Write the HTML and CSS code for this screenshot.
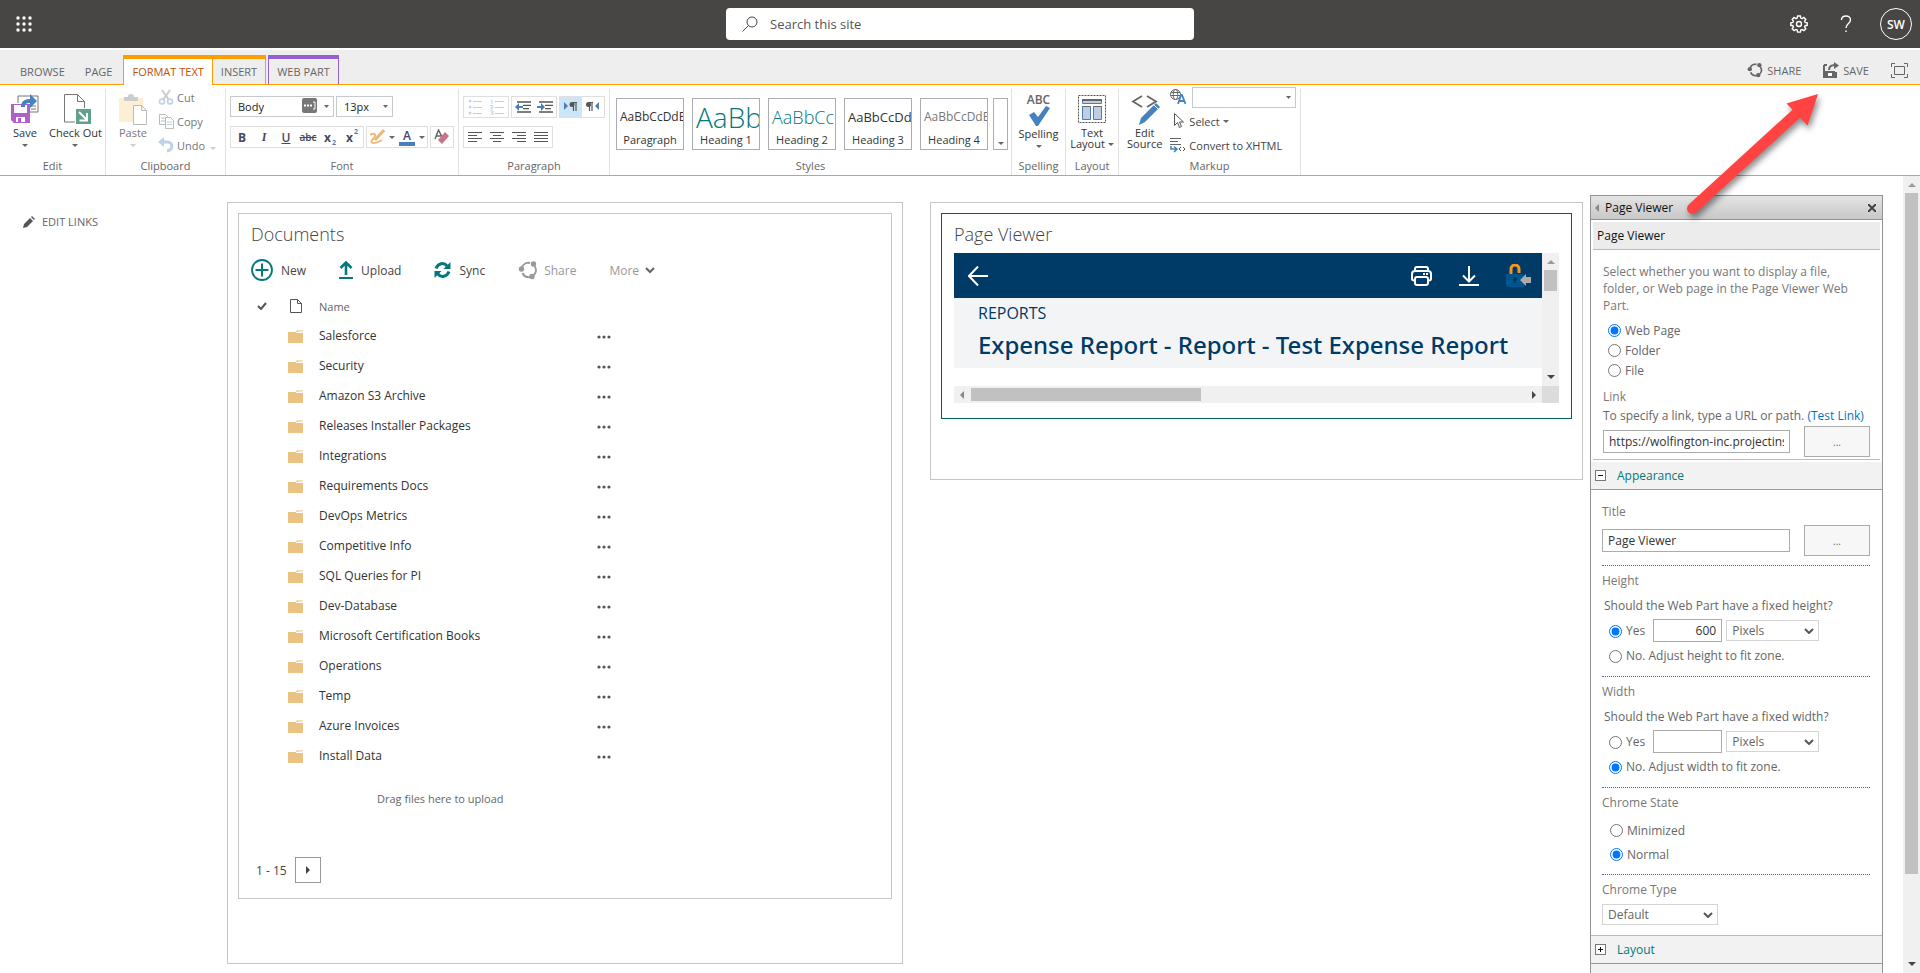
FILE: index.html
```html
<!DOCTYPE html>
<html lang="en">
<head>
    <meta charset="UTF-8">
    <meta name="viewport" content="width=device-width, initial-scale=1.0">
    <title>Documents</title>
    <link rel="stylesheet" href="styles.css">
</head>
<body>
    <svg class="defs" aria-hidden="true">
        <symbol id="folder" viewBox="0 0 15 13">
            <path d="M0 2h8l1-2h6v13H0z" fill="#eac282"/>
            <path d="M8 2.500h6.500v-1.500H9.500" fill="none" stroke="#fff"/>
        </symbol>
        <symbol id="dots" viewBox="0 0 14 4">
            <g fill="#555"><circle cx="2" cy="2" r="1.600"/><circle cx="7" cy="2" r="1.600"/><circle cx="12" cy="2" r="1.600"/></g>
        </symbol>
        <symbol id="share" viewBox="0 0 20 20">
            <g fill="none" stroke="currentColor" stroke-width="2"><path d="M4 7a7 7 0 0 1 8-4"/><path d="M16.500 6a7 7 0 0 1-.5 9"/><path d="M12 17a7 7 0 0 1-7.500-4"/></g>
            <g fill="currentColor"><circle cx="3.500" cy="9" r="2.700"/><circle cx="15.500" cy="4" r="2.700"/><circle cx="14" cy="16.500" r="2.700"/></g>
        </symbol>
    </svg>

    <header class="suite-bar">
        <button type="button" class="suite-btn waffle" aria-label="App launcher">
            <svg width="16" height="16" viewBox="0 0 16 16" fill="#fff"><circle cx="2" cy="2" r="1.700"/><circle cx="8" cy="2" r="1.700"/><circle cx="14" cy="2" r="1.700"/><circle cx="2" cy="8" r="1.700"/><circle cx="8" cy="8" r="1.700"/><circle cx="14" cy="8" r="1.700"/><circle cx="2" cy="14" r="1.700"/><circle cx="8" cy="14" r="1.700"/><circle cx="14" cy="14" r="1.700"/></svg>
        </button>
        <label class="search">
            <svg width="16" height="16" viewBox="0 0 16 16" fill="none" stroke="#444"><circle cx="10" cy="6" r="5"/><path d="M6.500 9.500L.5 15.500"/></svg>
            <input type="text" placeholder="Search this site" aria-label="Search this site">
        </label>
        <div class="suite-actions">
            <button type="button" class="suite-btn" aria-label="Settings">
                <svg width="18" height="18" viewBox="0 0 18 18" fill="none" stroke="#fff" stroke-width="1.400"><circle cx="9" cy="9" r="2.500"/><path d="M7.600 1h2.800l.4 2.100 1.300.5 1.800-1.200 1.900 1.900-1.200 1.800.5 1.300 2.100.4v2.500l-2.100.4-.5 1.300 1.200 1.800-1.900 1.900-1.800-1.200-1.300.5-.4 2.100H7.600l-.4-2.100-1.300-.5-1.800 1.200-1.900-1.900 1.200-1.800-.5-1.300L.8 10.300V7.800l2.100-.4.5-1.300-1.200-1.800 1.900-1.900 1.800 1.200 1.300-.5z"/></svg>
            </button>
            <button type="button" class="suite-btn" aria-label="Help">
                <svg width="12" height="18" viewBox="0 0 12 18" fill="none" stroke="#fff" stroke-width="1.400"><path d="M1.500 5C1.500 2.500 3.300 1 6 1s4.500 1.500 4.500 4C10.500 8.500 6 8.500 6 13M6 15.500V17"/></svg>
            </button>
            <button type="button" class="avatar">SW</button>
        </div>
    </header>

    <nav class="tab-row">
        <a href="#" class="tab">BROWSE</a>
        <a href="#" class="tab">PAGE</a>
        <a href="#" class="tab active">FORMAT TEXT</a>
        <a href="#" class="tab insert">INSERT</a>
        <a href="#" class="tab webpart">WEB PART</a>
        <div class="tab-actions">
            <button type="button"><svg class="icon-16" width="16" height="16"><use href="#share"/></svg>SHARE</button>
            <button type="button">
                <svg width="16" height="16" viewBox="0 0 16 16"><path d="M1 3v12h12v-5M1 3h3" fill="none" stroke="#666" stroke-width="2"/><path d="M2 9h10v6H2z" fill="#666"/><path d="M5 11h4v3H5z" fill="#fff"/><path d="M6 8c0-4 3-5 6-5" fill="none" stroke="#666" stroke-width="2"/><path d="M11 0l5 3.500-5 3.500z" fill="#666"/></svg>SAVE
            </button>
            <button type="button" aria-label="Focus on content">
                <svg width="17" height="15" viewBox="0 0 17 15" fill="none" stroke="#666"><path d="M4 .5H.5V4M13 .5h3.500V4M4 14.500H.5V11M13 14.500h3.500V11"/><path d="M3.500 3.500h10v8h-10z"/></svg>
            </button>
        </div>
    </nav>

    <section class="ribbon">
        <div class="group group-edit">
            <div class="group-body">
                <button type="button" class="big-btn">
                    <svg width="32" height="32" viewBox="0 0 32 32"><path d="M9 10V3h20v16h-8" fill="#fff" stroke="#777"/><path d="M22 13h5M22 16h5" stroke="#777"/><path d="M2 11h19v19H5l-3-3z" fill="#b35fcb"/><path d="M5 12h13v8H5z" fill="#fff"/><path d="M7 24h9v5H7z" fill="#fff"/><path d="M9 25h3v4H9z" fill="#b35fcb"/><path d="M12 14c0-6 4-8 9-8V1l7 7-7 7v-5c-4 0-5 1-5 4z" fill="#4682c0"/></svg>
                    Save<i class="caret"></i>
                </button>
                <button type="button" class="big-btn">
                    <svg width="32" height="32" viewBox="0 0 32 32"><path d="M16 29H5.500V1.500h13l7 7V15M18.500 1.500v7h7" fill="#fff" stroke="#777"/><path d="M17 16h15v15H17z" fill="#5fa18b"/><path d="M20 19l8 8M28 20v7.500h-7.500" fill="none" stroke="#fff" stroke-width="2"/></svg>
                    Check Out<i class="caret"></i>
                </button>
            </div>
            <div class="group-title">Edit</div>
        </div>
        <div class="group group-clipboard">
            <div class="group-body">
                <button type="button" class="big-btn disabled">
                    <svg width="32" height="32" viewBox="0 0 32 32"><path d="M2 5h24v24H2z" fill="#fcefd5"/><path d="M7 4h4a3 3 0 0 1 6 0h4v4H7z" fill="#ccc"/><path d="M16.500 12.500h8l5 5v14h-13zM24.500 12.500v5h5" fill="#fff" stroke="#bbb"/></svg>
                    Paste<i class="caret"></i>
                </button>
                <div class="small-list disabled">
                    <button type="button"><svg width="16" height="16" viewBox="0 0 16 16" fill="none"><path d="M4 1l7 10M12 1L5 11" stroke="#ccc" stroke-width="2"/><circle cx="4" cy="12.500" r="2.500" stroke="#bcd2e8" stroke-width="1.500"/><circle cx="12" cy="12.500" r="2.500" stroke="#bcd2e8" stroke-width="1.500"/></svg>Cut</button>
                    <button type="button"><svg width="16" height="16" viewBox="0 0 16 16" fill="#fff" stroke="#bbb"><path d="M1.500 1.500h6l2 2v8h-8zM3 5h5M3 8h5"/><path d="M7.500 4.500h5l3 3v8h-8z"/><path d="M9 9h5M9 11.500h5" stroke="#bcd2e8"/></svg>Copy</button>
                    <button type="button"><svg width="16" height="16" viewBox="0 0 16 16"><path d="M4 5h5c7 0 6 8 0 9" fill="none" stroke="#bcd2e8" stroke-width="3"/><path d="M6 0v10L0 5z" fill="#bcd2e8"/></svg>Undo<i class="caret"></i></button>
                </div>
            </div>
            <div class="group-title">Clipboard</div>
        </div>
        <div class="group group-font">
            <div class="group-body rows">
                <div class="tool-row">
                    <div class="font-name">
                        <select class="rb-select" aria-label="Font"><option>Body</option></select>
                        <svg class="autofill" width="15" height="15" viewBox="0 0 15 15"><rect width="15" height="15" rx="2" fill="#777"/><path d="M2 7.500h2M5 7.500h2M8 7.500h2" stroke="#fff" stroke-width="2"/><path d="M11 4h2v7h-2" fill="none" stroke="#fff"/></svg>
                    </div>
                    <select class="rb-select size" aria-label="Font size"><option>13px</option></select>
                </div>
                <div class="tool-row">
                    <div class="tools">
                        <button type="button" class="t-bold">B</button>
                        <button type="button" class="t-italic">I</button>
                        <button type="button" class="t-under">U</button>
                        <button type="button" class="t-strike">abc</button>
                        <button type="button" class="t-script">x<sub>2</sub></button>
                        <button type="button" class="t-script">x<sup>2</sup></button>
                    </div>
                    <div class="tools wide">
                        <button type="button" aria-label="Highlight"><svg width="16" height="16" viewBox="0 0 16 16"><path d="M1 6c5-3 7 0 3 4s0 5 5 3l4-2" fill="none" stroke="#ecb770" stroke-width="1.800"/><path d="M15 1L6 11" stroke="#ecb770" stroke-width="3"/></svg><i class="caret"></i></button>
                        <button type="button" aria-label="Font color"><span class="font-color">A</span><i class="caret"></i></button>
                    </div>
                    <div class="tools">
                        <button type="button" aria-label="Clear format"><svg width="16" height="16" viewBox="0 0 16 16"><path d="M1 10L4.500 1 8 8M2.500 7H7" fill="none" stroke="#666" stroke-width="1.500"/><path d="M11 3l4 4-7 8-4-4z" fill="#cc7388"/></svg></button>
                    </div>
                </div>
            </div>
            <div class="group-title">Font</div>
        </div>
        <div class="group group-paragraph">
            <div class="group-body rows">
                <div class="tool-row">
                    <div class="tools">
                        <button type="button" aria-label="Bullets"><svg width="14" height="16" viewBox="0 0 14 16"><g fill="#c2d5e8"><circle cx="2" cy="2" r="1.500"/><circle cx="2" cy="8" r="1.500"/><circle cx="2" cy="14" r="1.500"/></g><path d="M5 2.500h9M5 8.500h9M5 14.500h9" stroke="#ccc"/></svg></button>
                        <button type="button" aria-label="Numbering"><svg width="14" height="16" viewBox="0 0 14 16" fill="none"><path d="M1 1h1v4M0 6.500h3v2H1v1.500h2M0 12h3v4H0M1 14h2" stroke="#c2d5e8"/><path d="M5 2.500h9M5 8.500h9M5 14.500h9" stroke="#ccc"/></svg></button>
                    </div>
                    <div class="tools">
                        <button type="button" aria-label="Outdent"><svg width="16" height="12" viewBox="0 0 16 12"><path d="M2 1h14M8 4.300h8M8 7.600h6M2 11h14" stroke="#555" stroke-width="1.300"/><path d="M0 6l4-4v3h4v2H4v3z" fill="#4a7ebb"/></svg></button>
                        <button type="button" aria-label="Indent"><svg width="16" height="12" viewBox="0 0 16 12"><path d="M2 1h14M8 4.300h8M8 7.600h6M2 11h14" stroke="#555" stroke-width="1.300"/><path d="M8 6L4 2v3H0v2h4v3z" fill="#4a7ebb"/></svg></button>
                    </div>
                    <div class="tools">
                        <button type="button" class="on" aria-label="Left to right"><svg width="14" height="12" viewBox="0 0 14 12"><path d="M0 1l4 4-4 4z" fill="#4a7ebb"/><path d="M9.500 1v9M12 1v9M13 1.500H9" stroke="#555" stroke-width="1.200"/><circle cx="8" cy="3.500" r="2.500" fill="#555"/></svg></button>
                        <button type="button" aria-label="Right to left"><svg width="14" height="12" viewBox="0 0 14 12"><path d="M13 1L9 5l4 4z" fill="#4a7ebb"/><path d="M3.500 1v9M6 1v9M7 1.500H3" stroke="#555" stroke-width="1.200"/><circle cx="2.500" cy="3.500" r="2.500" fill="#555"/></svg></button>
                    </div>
                </div>
                <div class="tool-row">
                    <div class="tools">
                        <button type="button" aria-label="Align left"><svg width="14" height="11" viewBox="0 0 14 11" stroke="#555"><path d="M0 .5h14M0 3.500h9M0 6.500h14M0 9.500h9"/></svg></button>
                        <button type="button" aria-label="Center"><svg width="14" height="11" viewBox="0 0 14 11" stroke="#555"><path d="M0 .5h14M3 3.500h8M0 6.500h14M3 9.500h8"/></svg></button>
                        <button type="button" aria-label="Align right"><svg width="14" height="11" viewBox="0 0 14 11" stroke="#555"><path d="M0 .5h14M5 3.500h9M0 6.500h14M5 9.500h9"/></svg></button>
                        <button type="button" aria-label="Justify"><svg width="14" height="11" viewBox="0 0 14 11" stroke="#555"><path d="M0 .5h14M0 3.500h14M0 6.500h14M0 9.500h14"/></svg></button>
                    </div>
                </div>
            </div>
            <div class="group-title">Paragraph</div>
        </div>
        <div class="group group-styles">
            <div class="group-body style-list">
                <button type="button" class="style-btn"><span class="sample s-p">AaBbCcDdE</span><span>Paragraph</span></button>
                <button type="button" class="style-btn"><span class="sample s-h1">AaBb</span><span>Heading 1</span></button>
                <button type="button" class="style-btn"><span class="sample s-h2">AaBbCc</span><span>Heading 2</span></button>
                <button type="button" class="style-btn"><span class="sample s-h3">AaBbCcDd</span><span>Heading 3</span></button>
                <button type="button" class="style-btn"><span class="sample s-h4">AaBbCcDdE</span><span>Heading 4</span></button>
                <button type="button" class="style-more" aria-label="More styles"><i class="caret"></i></button>
            </div>
            <div class="group-title">Styles</div>
        </div>
        <div class="group group-spelling">
            <div class="group-body">
                <button type="button" class="big-btn">
                    <span class="abc">ABC</span>
                    <svg width="22" height="20" viewBox="0 0 22 20"><path d="M1 9l5-3 4 5 8-11 4 2-12 18H8z" fill="#4682c0"/></svg>
                    Spelling<i class="caret"></i>
                </button>
            </div>
            <div class="group-title">Spelling</div>
        </div>
        <div class="group group-layout">
            <div class="group-body">
                <button type="button" class="big-btn">
                    <svg width="32" height="32" viewBox="0 0 32 32"><path d="M2.500 2.500h27v27h-27z" fill="none" stroke="#555" stroke-dasharray="2 1"/><path d="M6.500 6.500h19v4h-19zM6.500 13.500h8v13h-8zM17.500 13.500h8v13h-8z" fill="#bccfe2" stroke="#4a7ebb"/><path d="M6.500 6.500h19v1h-19zM6.500 13.500h8M17.500 13.500h8" stroke="#666"/></svg>
                    <span>Text<br>Layout <i class="caret"></i></span>
                </button>
            </div>
            <div class="group-title">Layout</div>
        </div>
        <div class="group group-markup">
            <div class="group-body">
                <button type="button" class="big-btn">
                    <svg width="32" height="32" viewBox="0 0 32 32"><path d="M13 3L4 8.500 13 14M18 3l9 5.500L18 14" fill="none" stroke="#666" stroke-width="1.800"/><path d="M27 10l4 4-15 15-6 3 2-7z" fill="#4682c0"/><path d="M25 12l4 4" stroke="#fff"/></svg>
                    <span>Edit<br>Source</span>
                </button>
                <div class="small-list">
                    <div class="lang-row">
                        <svg width="16" height="16" viewBox="0 0 16 16"><g fill="none" stroke="#666"><circle cx="5.500" cy="5.500" r="5"/><ellipse cx="5.500" cy="5.500" rx="2.200" ry="5"/><path d="M1 3.500h9M.5 6.500h10"/></g><path d="M8 15l3-9h1l3.500 9M9 12h5" fill="none" stroke="#4682c0" stroke-width="1.800"/></svg>
                        <select class="rb-select lang" aria-label="Language"><option></option></select>
                    </div>
                    <button type="button"><svg width="16" height="16" viewBox="0 0 16 16"><path d="M4.500.5v12l3-3 2 5 2-1-2-4.500h4z" fill="#fff" stroke="#555"/></svg>Select <i class="caret"></i></button>
                    <button type="button"><svg width="16" height="16" viewBox="0 0 16 16" fill="none"><path d="M0 1.500h11M0 4.500h8M0 7.500h11" stroke="#666"/><path d="M1 9v3h5M4 9.500L7 12l-3 3" stroke="#4682c0" stroke-width="1.600"/><path d="M11 10l-2 2 2 2M13 10l2 2-2 2" stroke="#555"/></svg>Convert to XHTML</button>
                </div>
            </div>
            <div class="group-title">Markup</div>
        </div>
    </section>

    <main class="workspace">
        <aside class="side-nav">
            <a href="#"><svg width="12" height="12" viewBox="0 0 12 12" fill="#555"><path d="M0 12l1-4 6-6 3 3-6 6zM8 1l1-1 3 3-1 1z"/></svg>EDIT LINKS</a>
        </aside>

        <div class="zones">
            <section class="zone zone-docs">
                <div class="web-part">
                    <h2>Documents</h2>
                    <div class="commands">
                        <button type="button"><svg width="22" height="22" viewBox="0 0 22 22" fill="none" stroke="#03787c"><circle cx="11" cy="11" r="10" stroke-width="1.800"/><path d="M11 4.500v13M4.500 11h13" stroke-width="2"/></svg>New</button>
                        <button type="button"><svg width="14" height="18" viewBox="0 0 14 18" fill="none" stroke="#03787c"><path d="M0 17h14" stroke-width="2"/><path d="M7 14V2M1.500 7L7 1.500 12.500 7" stroke-width="2.600"/></svg>Upload</button>
                        <button type="button"><svg width="17" height="18" viewBox="0 0 17 18" fill="none" stroke="#03787c" stroke-width="3"><path d="M2 7.500C4 2 10 1 13 5M15 10.500C13 16 7 17 4 13"/><path d="M16.500 1v7h-7zM.5 17v-7h7z" fill="#03787c" stroke="none"/></svg>Sync</button>
                        <button type="button" class="muted"><svg class="share-lg" width="20" height="20"><use href="#share"/></svg>Share</button>
                        <button type="button" class="muted">More<svg class="chev" width="10" height="7" viewBox="0 0 10 7" fill="none" stroke="#666" stroke-width="2"><path d="M1 1l4 4 4-4"/></svg></button>
                    </div>
                    <table class="doc-list">
                        <thead>
                            <tr>
                                <th class="col-check"><svg width="10" height="8" viewBox="0 0 10 8" fill="none" stroke="#555" stroke-width="2"><path d="M1 4l3 3 5-6"/></svg></th>
                                <th class="col-icon"><svg width="12" height="14" viewBox="0 0 12 14" fill="none" stroke="#555"><path d="M.5.5h7l4 4v9H.5zM7.500.5v4h4"/></svg></th>
                                <th class="col-name">Name</th>
                                <th></th>
                            </tr>
                        </thead>
                        <tbody>
                            <tr><td></td><td><svg width="15" height="13"><use href="#folder"/></svg></td><td><a href="#">Salesforce</a></td><td><svg width="14" height="4"><use href="#dots"/></svg></td></tr>
                            <tr><td></td><td><svg width="15" height="13"><use href="#folder"/></svg></td><td><a href="#">Security</a></td><td><svg width="14" height="4"><use href="#dots"/></svg></td></tr>
                            <tr><td></td><td><svg width="15" height="13"><use href="#folder"/></svg></td><td><a href="#">Amazon S3 Archive</a></td><td><svg width="14" height="4"><use href="#dots"/></svg></td></tr>
                            <tr><td></td><td><svg width="15" height="13"><use href="#folder"/></svg></td><td><a href="#">Releases Installer Packages</a></td><td><svg width="14" height="4"><use href="#dots"/></svg></td></tr>
                            <tr><td></td><td><svg width="15" height="13"><use href="#folder"/></svg></td><td><a href="#">Integrations</a></td><td><svg width="14" height="4"><use href="#dots"/></svg></td></tr>
                            <tr><td></td><td><svg width="15" height="13"><use href="#folder"/></svg></td><td><a href="#">Requirements Docs</a></td><td><svg width="14" height="4"><use href="#dots"/></svg></td></tr>
                            <tr><td></td><td><svg width="15" height="13"><use href="#folder"/></svg></td><td><a href="#">DevOps Metrics</a></td><td><svg width="14" height="4"><use href="#dots"/></svg></td></tr>
                            <tr><td></td><td><svg width="15" height="13"><use href="#folder"/></svg></td><td><a href="#">Competitive Info</a></td><td><svg width="14" height="4"><use href="#dots"/></svg></td></tr>
                            <tr><td></td><td><svg width="15" height="13"><use href="#folder"/></svg></td><td><a href="#">SQL Queries for PI</a></td><td><svg width="14" height="4"><use href="#dots"/></svg></td></tr>
                            <tr><td></td><td><svg width="15" height="13"><use href="#folder"/></svg></td><td><a href="#">Dev-Database</a></td><td><svg width="14" height="4"><use href="#dots"/></svg></td></tr>
                            <tr><td></td><td><svg width="15" height="13"><use href="#folder"/></svg></td><td><a href="#">Microsoft Certification Books</a></td><td><svg width="14" height="4"><use href="#dots"/></svg></td></tr>
                            <tr><td></td><td><svg width="15" height="13"><use href="#folder"/></svg></td><td><a href="#">Operations</a></td><td><svg width="14" height="4"><use href="#dots"/></svg></td></tr>
                            <tr><td></td><td><svg width="15" height="13"><use href="#folder"/></svg></td><td><a href="#">Temp</a></td><td><svg width="14" height="4"><use href="#dots"/></svg></td></tr>
                            <tr><td></td><td><svg width="15" height="13"><use href="#folder"/></svg></td><td><a href="#">Azure Invoices</a></td><td><svg width="14" height="4"><use href="#dots"/></svg></td></tr>
                            <tr><td></td><td><svg width="15" height="13"><use href="#folder"/></svg></td><td><a href="#">Install Data</a></td><td><svg width="14" height="4"><use href="#dots"/></svg></td></tr>
                        </tbody>
                    </table>
                    <p class="drag-hint">Drag files here to upload</p>
                    <div class="paging">
                        <span>1 - 15</span>
                        <button type="button" aria-label="Next page"><i class="tri right"></i></button>
                    </div>
                </div>
            </section>

            <section class="zone zone-viewer">
                <div class="web-part selected">
                    <h2>Page Viewer</h2>
                    <div class="viewer">
                        <div class="viewer-page">
                            <div class="viewer-bar">
                                <svg width="20" height="20" viewBox="0 0 20 20" fill="none" stroke="#fff" stroke-width="2"><path d="M20 10H1M10 .5L1 10l9 9.500"/></svg>
                                <div class="viewer-icons">
                                    <svg width="21" height="20" viewBox="0 0 21 20" fill="none" stroke="#fff" stroke-width="2"><path d="M4 5V3a2 2 0 0 1 2-2h9a2 2 0 0 1 2 2v2M4 14.500H3a2 2 0 0 1-2-2V8a3 3 0 0 1 3-3h13a3 3 0 0 1 3 3v4.500a2 2 0 0 1-2 2h-1"/><rect x="4" y="11" width="13" height="8" rx="2"/><path d="M12 8h2M15 8h2"/></svg>
                                    <svg width="20" height="20" viewBox="0 0 20 20" fill="none" stroke="#fff" stroke-width="2"><path d="M10 0v15M4 9.500l6 6 6-6M0 19h20"/></svg>
                                    <svg width="25" height="23" viewBox="0 0 25 23"><path d="M5 10V5a4 4 0 0 1 8 0v4" fill="none" stroke="#f7941d" stroke-width="3"/><rect y="10" width="18" height="13" rx="2" fill="#00558f"/><circle cx="9" cy="15" r="2" fill="#003a66"/><path d="M8 15h2v4H8z" fill="#003a66"/><path d="M14 16l6-6v3h5v6h-5v3z" fill="#aaa"/></svg>
                                </div>
                            </div>
                            <div class="viewer-head">
                                <div class="crumb">REPORTS</div>
                                <h1>Expense Report - Report - Test Expense Report</h1>
                            </div>
                        </div>
                        <div class="vbar"><i class="tri up"></i><span class="thumb"></span><i class="tri down"></i></div>
                        <div class="hbar"><i class="tri left"></i><span class="thumb"></span><i class="tri right"></i></div>
                        <div class="corner"></div>
                    </div>
                </div>
            </section>
        </div>

        <aside class="tool-pane">
            <div class="pane-head"><i class="tri left"></i><span>Page Viewer</span>
                <button type="button" aria-label="Close"><svg width="8" height="8" viewBox="0 0 8 8" stroke="#444" stroke-width="2"><path d="M0 0l8 8M8 0L0 8"/></svg></button>
            </div>
            <h3 class="pane-title">Page Viewer</h3>
            <div class="pane-source">
                <p>Select whether you want to display a file, folder, or Web page in the Page Viewer Web Part.</p>
                <div class="radio-list">
                    <label><input type="radio" name="kind" checked>Web Page</label>
                    <label><input type="radio" name="kind">Folder</label>
                    <label><input type="radio" name="kind">File</label>
                </div>
                <label class="link-label" for="link">Link</label>
                <div class="link-help">To specify a link, type a URL or path. <a href="#">(Test Link)</a></div>
                <div class="field-row">
                    <input type="text" id="link" value="https://wolfington-inc.projectinsight.net">
                    <button type="button">...</button>
                </div>
            </div>
            <div class="section-head"><button type="button" aria-label="Collapse"><svg width="9" height="9" viewBox="0 0 9 9" stroke="#111"><path d="M2 4.500h5"/></svg></button><a href="#">Appearance</a></div>
            <div class="prop prop-title">
                <label class="prop-label" for="title">Title</label>
                <div class="field-row">
                    <input type="text" id="title" value="Page Viewer">
                    <button type="button">...</button>
                </div>
            </div>
            <div class="prop">
                <div class="prop-label">Height</div>
                <div class="question">Should the Web Part have a fixed height?</div>
                <div class="size-row">
                    <label><input type="radio" name="height" checked>Yes</label>
                    <input type="text" value="600" aria-label="Height">
                    <select aria-label="Height unit"><option>Pixels</option></select>
                </div>
                <div class="size-row"><label><input type="radio" name="height">No. Adjust height to fit zone.</label></div>
            </div>
            <div class="prop">
                <div class="prop-label">Width</div>
                <div class="question">Should the Web Part have a fixed width?</div>
                <div class="size-row">
                    <label><input type="radio" name="width">Yes</label>
                    <input type="text" value="" aria-label="Width">
                    <select aria-label="Width unit"><option>Pixels</option></select>
                </div>
                <div class="size-row"><label><input type="radio" name="width" checked>No. Adjust width to fit zone.</label></div>
            </div>
            <div class="prop">
                <div class="prop-label">Chrome State</div>
                <div class="state-list">
                    <label><input type="radio" name="state">Minimized</label>
                    <label><input type="radio" name="state" checked>Normal</label>
                </div>
            </div>
            <div class="prop last">
                <label class="prop-label" for="chrome">Chrome Type</label>
                <select id="chrome"><option>Default</option></select>
            </div>
            <div class="section-head"><button type="button" aria-label="Expand"><svg width="9" height="9" viewBox="0 0 9 9" stroke="#111"><path d="M2 4.500h5M4.500 2v5"/></svg></button><a href="#">Layout</a></div>
            <div class="section-head"></div>
        </aside>

        <div class="page-scroll"><i class="tri up"></i><span class="thumb"></span><i class="tri down"></i></div>
    </main>

    <!-- callout pointing at the save button -->
    <svg class="callout" width="150" height="140" viewBox="0 0 150 140" aria-hidden="true">
        <path d="M14.500 128.500L118 34" stroke="#ff4343" stroke-width="11" stroke-linecap="round"/>
        <path d="M140 14l-31.500 9.500 21 22z" fill="#ff4343"/>
    </svg>
</body>
</html>
```
FILE: styles.css
```css
* {
    box-sizing: border-box;
}
body {
    margin: 0;
    height: 100vh;
    display: flex;
    flex-direction: column;
    overflow: hidden;
    position: relative;
    font-family: "Open Sans", sans-serif;
    font-size: 12px;
    color: #444;
    background: #fff;
}
button, input, select {
    font-family: inherit;
    font-size: inherit;
    color: inherit;
}
button {
    padding: 0;
    border: none;
    background: none;
    cursor: pointer;
}
a {
    color: inherit;
    text-decoration: none;
}
svg {
    flex: none;
    display: block;
}
.defs {
    position: absolute;
    width: 0;
    height: 0;
}

/* arrows */
.caret {
    display: inline-block;
    border: 3px solid transparent;
    border-top-color: #666;
    border-bottom: none;
}
.tri {
    flex: none;
    width: 0;
    height: 0;
    border: 4px solid transparent;
}
.tri.up { border-top: none; border-bottom-color: #999; }
.tri.down { border-bottom: none; border-top-color: #444; }
.tri.left { border-left: none; border-right-color: #888; }
.tri.right { border-right: none; border-left-color: #444; }

/* suite bar */
.suite-bar {
    flex: none;
    height: 48px;
    display: grid;
    grid-template-columns: 1fr 468px 1fr;
    align-items: center;
    padding: 0 8px;
    background: #484644;
}
.waffle {
    justify-self: start;
    margin-left: 8px;
}
.search {
    display: flex;
    align-items: center;
    gap: 10px;
    height: 32px;
    padding: 0 16px;
    border-radius: 4px;
    background: #fff;
}
.search input {
    flex: 1;
    border: none;
    outline: none;
    font-size: 13px;
}
.search input::placeholder {
    color: #555;
}
.suite-actions {
    justify-self: end;
    display: flex;
    align-items: center;
    gap: 32px;
}
.avatar {
    width: 32px;
    height: 32px;
    border: 1px solid #fff;
    border-radius: 50%;
    color: #fff;
    font-weight: 600;
}
.suite-actions .suite-btn:nth-child(2) {
    margin-right: -4px;
}

/* tabs */
.tab-row {
    flex: none;
    display: flex;
    height: 35px;
    margin-top: 2px;
    padding-left: 4px;
    background: #eee;
    border-bottom: 1px solid #ff9d00;
    font-size: 11px;
    color: #666;
}
.tab {
    margin-top: 5px;
    padding: 4px 12px 0 16px;
    line-height: 26px;
    height: 29px;
}
.tab:nth-child(2) {
    padding: 4px 11px 0 8px;
}
.tab.active {
    height: 30px;
    padding: 0 8px;
    border: 1px solid #ff9d00;
    border-top-width: 4px;
    border-bottom: none;
    background: #fff;
    color: #c05000;
}
.tab.insert {
    padding: 0 8px;
    border-top: 4px solid #ff9d00;
    border-right: 1px solid #ff9d00;
}
.tab.webpart {
    margin-left: 2px;
    padding: 0 8px;
    border: 1px solid #9460d4;
    border-top-width: 4px;
    border-bottom: none;
}
.tab-actions {
    margin-left: auto;
    display: flex;
    align-items: center;
    gap: 22px;
    padding: 6px 12px 0 0;
}
.tab-actions button {
    display: flex;
    align-items: center;
    gap: 4px;
}

/* ribbon */
.ribbon {
    flex: none;
    display: flex;
    height: 91px;
    padding-top: 4px;
    border-bottom: 1px solid #ff9d00;
    font-size: 11px;
}
.group {
    flex: none;
    display: flex;
    flex-direction: column;
    border-right: 1px solid #e1e1e1;
}
.group-edit { width: 106px; }
.group-clipboard { width: 120px; }
.group-font { width: 233px; }
.group-paragraph { width: 151px; }
.group-styles { width: 402px; }
.group-spelling { width: 54px; }
.group-layout { width: 53px; }
.group-markup { width: 182px; }
.group-body {
    flex: 1;
    min-height: 0;
    display: flex;
    justify-content: center;
}
.group-edit .group-body {
    justify-content: flex-start;
    gap: 8px;
    padding-left: 9px;
}
.group-clipboard .group-body {
    justify-content: flex-start;
    gap: 9px;
    padding-left: 11px;
}
.group-markup .group-body {
    justify-content: flex-start;
    gap: 8px;
    padding-left: 8px;
}
.group-title {
    flex: none;
    height: 18px;
    line-height: 18px;
    text-align: center;
    color: #666;
}
.big-btn {
    display: flex;
    flex-direction: column;
    align-items: center;
    padding-top: 4px;
    line-height: 11px;
    white-space: nowrap;
    color: #333;
    align-self: flex-start;
}
.big-btn > svg {
    margin-bottom: 2px;
}
.big-btn > .caret {
    margin-top: 6px;
}
.big-btn span .caret {
    margin-bottom: 2px;
}
.abc {
    font-size: 12px;
    font-weight: 600;
    line-height: 13px;
    color: #666;
}
.disabled, .disabled button {
    color: #777;
}
.disabled .caret {
    border-top-color: #ccc;
}
.small-list {
    display: flex;
    flex-direction: column;
    margin-top: -4px;
}
.small-list button, .lang-row {
    flex: none;
    height: 24px;
    display: flex;
    align-items: center;
    gap: 3px;
    white-space: nowrap;
}
.small-list.disabled .caret {
    margin: 6px 0 0 2px;
}
.rows {
    flex-direction: column;
    justify-content: flex-start;
    gap: 8px;
    padding: 7px 0 0 4px;
}
.tool-row {
    display: flex;
    gap: 2px;
    height: 22px;
}
.font-name {
    position: relative;
    width: 104px;
}
.autofill {
    position: absolute;
    top: 2px;
    right: 17px;
}
.rb-select {
    appearance: none;
    width: 100%;
    height: 21px;
    padding: 0 7px;
    border: 1px solid #c6cacf;
    border-radius: 0;
    color: #222;
    background: url("data:image/svg+xml,%3Csvg xmlns='http://www.w3.org/2000/svg' width='5' height='3'%3E%3Cpath d='M0 0h5L2.500 3z' fill='%23666'/%3E%3C/svg%3E") no-repeat right 4px center #fff;
}
.rb-select.size {
    width: 57px;
}
.rb-select.lang {
    width: 104px;
    margin-left: 3px;
}
.tools {
    display: flex;
    border: 1px solid #dfdfdf;
}
.tools button {
    width: 22px;
    display: flex;
    align-items: center;
    justify-content: center;
    gap: 4px;
    font-size: 12px;
    color: #444a5c;
}
.tools.wide button {
    width: 30px;
}
.tools button.on {
    background: #cde6f7;
}
.t-bold, .t-script {
    font-weight: 700;
}
.t-italic {
    font-family: "Liberation Serif", serif;
    font-style: italic;
    font-weight: 700;
}
.tools .t-under {
    text-decoration: underline;
    font-weight: 600;
}
.tools .t-strike {
    text-decoration: line-through;
    font-size: 10px;
    font-weight: 600;
}
.tools .t-script {
    gap: 1px;
}
.t-script sub, .t-script sup {
    font-size: 7px;
    color: #4a7ebb;
}
.t-script sub { align-self: flex-end; }
.t-script sup { align-self: flex-start; }
.font-color {
    line-height: 13px;
    padding: 0 4px;
    border-bottom: 4px solid #4a7ebb;
    font-weight: 600;
}
.style-list {
    gap: 8px;
    padding: 9px 2px 0 6px;
    justify-content: flex-start;
}
.style-btn {
    width: 68px;
    height: 52px;
    flex: none;
    overflow: hidden;
    border: 1px solid #aaaeb4;
    display: flex;
    flex-direction: column;
    align-items: center;
    line-height: 14px;
    color: #333;
}
.sample {
    width: 100%;
    overflow: hidden;
    height: 34px;
    line-height: 36px;
    padding-left: 3px;
    text-align: left;
    white-space: nowrap;
}
.s-p { font-size: 12px; }
.s-h1 { font-size: 28px; font-weight: 300; color: #03787c; }
.s-h2 { font-size: 18px; font-weight: 300; color: #03787c; }
.s-h3 { font-size: 13px; }
.s-h4 { font-size: 12px; color: #777; }
.style-more {
    width: 15px;
    height: 52px;
    margin-left: -3px;
    border: 1px solid #aaaeb4;
    display: flex;
    align-items: flex-end;
    justify-content: center;
    padding-bottom: 4px;
}

/* page */
.workspace {
    flex: 1;
    min-height: 0;
    display: flex;
}
.side-nav {
    flex: none;
    width: 227px;
    padding: 38px 0 0 23px;
    font-size: 11px;
    color: #666;
}
.side-nav a {
    display: flex;
    align-items: center;
    gap: 7px;
}
.zones {
    flex: 1;
    display: grid;
    grid-template-columns: 676fr 653fr;
    align-items: start;
    gap: 27px;
    padding-top: 26px;
}
.zone {
    min-width: 0;
    border: 1px solid #c6c6c6;
    padding: 10px;
}
.zone-docs { padding-bottom: 64px; }
.zone-viewer { padding-bottom: 60px; }
.web-part {
    border: 1px solid #c6c6c6;
    padding: 8px 12px 15px;
}
.web-part.selected {
    border-color: #005e5f;
}
.web-part h2 {
    margin: 0;
    font-size: 18px;
    line-height: 24px;
    font-weight: 300;
    color: #444;
}
.commands {
    display: flex;
    align-items: center;
    gap: 33px;
    height: 48px;
}
.commands button {
    display: flex;
    align-items: center;
    gap: 8px;
}
.commands .muted {
    color: #999;
    gap: 6px;
}
.doc-list {
    border-collapse: collapse;
    color: #333;
}
.doc-list th, .doc-list td {
    padding: 0;
    height: 30px;
    text-align: left;
    font-weight: 400;
}
.doc-list th {
    height: 26px;
    padding-bottom: 2px;
    font-size: 11px;
    color: #666;
}
.doc-list td svg {
    margin-top: 3px;
}
.doc-list th.col-check {
    width: 37px;
    padding-left: 6px;
}
.doc-list th.col-icon {
    width: 31px;
    padding-left: 2px;
}
.col-name { width: 278px; }
.drag-hint {
    margin: 20px 0 0;
    padding-left: 126px;
    line-height: 18px;
    font-size: 11px;
    color: #666;
}
.paging {
    display: flex;
    align-items: center;
    gap: 8px;
    margin-top: 49px;
    padding-left: 5px;
}
.paging button {
    width: 26px;
    height: 26px;
    display: flex;
    align-items: center;
    justify-content: center;
    border: 1px solid #999;
}

/* embedded viewer */
.viewer {
    display: grid;
    grid-template-columns: minmax(0, 1fr) 17px;
    grid-template-rows: 133px 17px;
    margin-top: 7px;
}
.viewer-bar {
    height: 45px;
    display: flex;
    align-items: center;
    justify-content: space-between;
    padding: 0 11px 0 14px;
    background: #003a66;
}
.viewer-icons {
    display: flex;
    align-items: center;
    gap: 27px;
}
.viewer-head {
    height: 70px;
    padding: 3px 24px 0;
    overflow: hidden;
    white-space: nowrap;
    background: #f3f4f6;
    color: #003a66;
}
.crumb {
    font-size: 16px;
    line-height: 24px;
}
.viewer-head h1 {
    margin: 4px 0 0;
    font-family: "Noto Sans", sans-serif;
    font-size: 24px;
    line-height: 32px;
    font-weight: 500;
}
.vbar, .hbar, .page-scroll {
    display: flex;
    align-items: center;
    background: #f0f0f0;
}
.vbar, .page-scroll {
    flex-direction: column;
    padding: 7px 0;
}
.hbar { padding: 0 6px; }
.thumb { background: #c1c1c1; }
.vbar .thumb {
    width: 13px;
    height: 21px;
    margin: 6px 0 auto;
}
.hbar .thumb {
    width: 40%;
    height: 13px;
    margin: 0 auto 0 7px;
}
.corner { background: #dcdcdc; }
.page-scroll {
    flex: none;
    width: 17px;
    margin-left: 20px;
}
.page-scroll .thumb {
    width: 13px;
    height: 87%;
    margin: 6px 0 auto;
}

/* tool pane */
.tool-pane {
    flex: none;
    width: 293px;
    margin: 19px 0 0 7px;
    border: 1px solid #8f9398;
    border-bottom: none;
    overflow: hidden;
    color: #666;
}
.pane-head {
    height: 24px;
    display: flex;
    align-items: center;
    gap: 6px;
    padding: 0 6px 0 4px;
    border-bottom: 1px solid #8f9398;
    background: linear-gradient(#e4e4e4, #c8c8c8);
    color: #111;
}
.pane-head button {
    margin-left: auto;
}
.pane-title {
    margin: 2px 2px 0;
    padding: 0 4px;
    height: 28px;
    line-height: 28px;
    border-bottom: 1px solid #bbb;
    background: #ececec;
    font-size: 12px;
    font-weight: 400;
    color: #111;
}
.pane-source {
    margin: 0 2px 2px;
    padding: 13px 10px 2px;
    border-bottom: 1px solid #bbb;
}
.pane-source p {
    margin: 0;
    padding-right: 12px;
    line-height: 17px;
    color: #777;
}
input[type="radio"] {
    width: 13px;
    height: 13px;
    margin: 1px 4px 0 0;
    accent-color: #0075ff;
}
.tool-pane label {
    display: flex;
    align-items: center;
}
.radio-list {
    padding: 6px 0 0 5px;
}
.radio-list label {
    height: 20px;
}
.pane-source .link-label {
    margin-top: 6px;
    height: 20px;
    color: #777;
}
.link-help {
    height: 20px;
    line-height: 20px;
    white-space: nowrap;
}
.link-help a { color: #0072c6; }
.field-row {
    display: flex;
    align-items: center;
    gap: 14px;
}
.tool-pane input[type="text"] {
    min-width: 0;
    height: 23px;
    padding: 0 5px;
    border: 1px solid #ababab;
    color: #333;
}
.field-row input {
    flex: 1;
}
.field-row button {
    width: 66px;
    height: 31px;
    border: 1px solid #ababab;
    background: #f7f7f7;
    font-size: 10px;
}
.section-head {
    height: 28px;
    display: flex;
    align-items: center;
    gap: 11px;
    padding-left: 4px;
    border-bottom: 1px solid #999;
    background: #f2f2f2;
    color: #03787c;
}
.section-head button {
    width: 11px;
    height: 11px;
    border: 1px solid #777;
    background: #fff;
}
.prop {
    margin: 0 12px 0 11px;
    padding: 5px 0 8px;
    border-bottom: 1px dotted #3a5fc0;
}
.prop-title {
    padding: 12px 0 9px;
}
.prop-label {
    height: 20px;
    line-height: 20px;
    color: #777;
}
.prop-title .field-row {
    margin-top: 3px;
}
.question {
    margin: 5px 0 2px;
    padding-left: 2px;
    line-height: 20px;
}
.size-row {
    display: flex;
    align-items: center;
    gap: 4px;
    height: 25px;
    padding-left: 7px;
}
.size-row input[type="text"] {
    width: 69px;
    margin-left: 4px;
    text-align: right;
}
.tool-pane select {
    appearance: none;
    width: 93px;
    height: 21px;
    padding: 0 5px;
    border: 1px solid #d5d5d5;
    border-radius: 0;
    background: url("data:image/svg+xml,%3Csvg xmlns='http://www.w3.org/2000/svg' width='10' height='6'%3E%3Cpath d='M1 1l4 4 4-4' fill='none' stroke='%23555' stroke-width='2'/%3E%3C/svg%3E") no-repeat right 4px center #fff;
}
.tool-pane #chrome {
    width: 116px;
    margin-top: 4px;
}
.state-list {
    padding: 5px 0 0 8px;
}
.state-list label {
    height: 24px;
}
.prop.last {
    margin: 0;
    padding: 5px 11px 10px;
    border-bottom: 1px solid #bbb;
}

.callout {
    position: absolute;
    top: 80px;
    right: 92px;
    filter: drop-shadow(2px 4px 3px rgba(0, 0, 0, 0.45));
}
```
